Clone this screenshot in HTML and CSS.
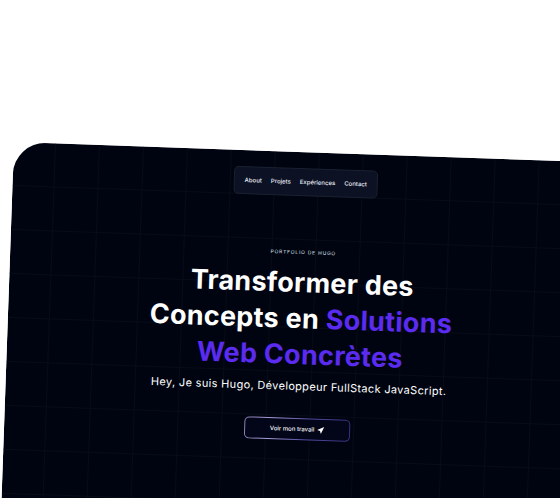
FILE: index.html
```html
<!DOCTYPE html>
<html lang="fr">
<head>
<meta charset="utf-8">
<meta name="viewport" content="width=device-width, initial-scale=1">
<title>Portfolio de Hugo</title>
<link rel="stylesheet" href="styles.css">
</head>
<body>
<div class="panel">
  <nav class="nav">
    <a href="#about">About</a>
    <a href="#projets">Projets</a>
    <a href="#experiences">Expériences</a>
    <a href="#contact">Contact</a>
  </nav>
  <main class="hero">
    <p class="eyebrow">Portfolio de Hugo</p>
    <h1 class="title">Transformer des Concepts en <span class="accent">Solutions Web Concrètes</span></h1>
    <p class="intro">Hey, Je suis Hugo, Développeur FullStack JavaScript.</p>
    <a class="cta" href="#projets">
      <span class="cta-label">Voir mon travail
        <svg class="cta-icon" viewBox="0 0 24 24" aria-hidden="true"><path d="M24 0 0 11l10 3 3 10z"/></svg>
      </span>
    </a>
  </main>
</div>
</body>
</html>
```

FILE: styles.css
```css
* {
  box-sizing: border-box;
}

html {
  height: 100%;
  overflow: hidden;
  background: #fff;
}

body {
  display: flex;
  height: 100%;
  margin: 0;
  padding-top: 142px;
  overflow: hidden;
  font-family: Inter, "Liberation Sans", sans-serif;
  color: #fff;
}

.panel {
  flex: 1;
  display: flex;
  flex-direction: column;
  align-items: center;
  margin: 0 -40px -24px 14px;
  padding-top: 16px;
  border-radius: 32px 32px 0 0;
  background-color: #000410;
  background-image:
    linear-gradient(to top, #070b16 1px, transparent 1px),
    linear-gradient(to left, #070b16 1px, transparent 1px);
  background-size: 44px 44px;
  background-position: -2px 0;
  transform: rotate(2deg);
  transform-origin: 0 0;
}

.nav {
  display: flex;
  gap: 9px;
  padding: 9px 10px;
  border: 1px solid #1a2130;
  border-radius: 5px;
  background: #0c1224;
  font-size: 6px;
  font-weight: 500;
  line-height: 8px;
}

.nav a {
  color: #eef1fa;
  text-decoration: none;
}

.hero {
  display: flex;
  flex-direction: column;
  align-items: center;
  padding-top: 52px;
  text-align: center;
}

.eyebrow {
  margin: 0;
  font-size: 5px;
  line-height: 8px;
  letter-spacing: 0.15em;
  text-transform: uppercase;
  color: #dfe3ee;
}

.title {
  max-width: 320px;
  margin: 9px 0 4px;
  font-size: 27px;
  font-weight: 700;
  line-height: 36px;
  letter-spacing: 0.01em;
}

.accent {
  color: #5b2bf0;
}

.intro {
  margin: 0;
  font-size: 11px;
  line-height: 18px;
  letter-spacing: 0.03em;
}

.cta {
  margin-top: 23px;
  padding: 1px;
  border-radius: 5px;
  background: linear-gradient(100deg, #8a7bb0, #a89bd8 25%, #5148a0 60%, #39307c);
  color: #fff;
  text-decoration: none;
}

.cta-label {
  display: flex;
  align-items: center;
  gap: 3px;
  padding: 6px 25px;
  border-radius: 4px;
  background: #030518;
  font-size: 6px;
  font-weight: 500;
  line-height: 8px;
}

.cta-icon {
  width: 7px;
  height: 7px;
  fill: currentColor;
}
```
